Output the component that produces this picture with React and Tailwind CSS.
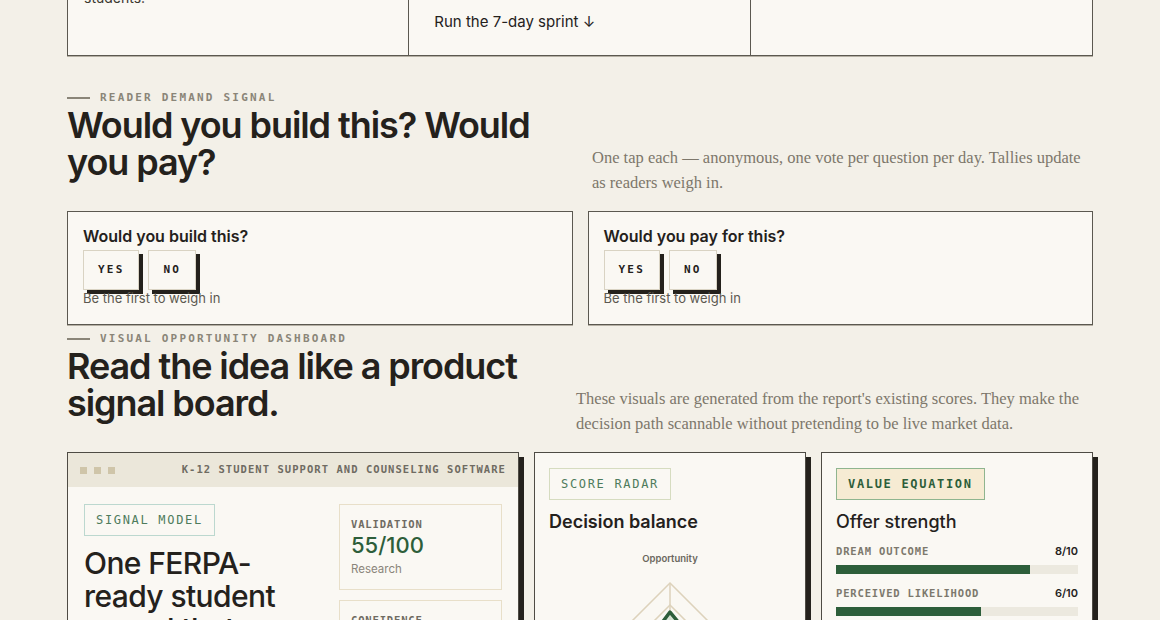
const display = "font-['Inter','Liberation_Sans',sans-serif]";
const mono = "font-['DejaVu_Sans_Mono','Liberation_Mono',monospace]";
const serif = "font-['Liberation_Serif','DejaVu_Serif',serif]";

function Eyebrow({ children }) {
    return (
        <div className="flex items-center gap-[10px]">
            <span className="h-[2px] w-[23px] bg-[#8a8578]" />
            <span className={`${mono} text-[11px] font-bold uppercase leading-[14px] tracking-[0.2em] text-[#8a8578]`}>
                {children}
            </span>
        </div>
    );
}

function SectionHead({ eyebrow, title, note, noteWidth }) {
    return (
        <div>
            <Eyebrow>{eyebrow}</Eyebrow>
            <div className="mt-[2px] flex items-end justify-between">
                <h2 className={`${display} w-[480px] pb-[14px] text-[36px] font-semibold leading-[37px] tracking-[-0.03em] text-[#24211c]`}>
                    {title}
                </h2>
                <p className={`${serif} ${noteWidth} text-[16.5px] leading-[25px] text-[#7d776b]`}>{note}</p>
            </div>
        </div>
    );
}

function VoteCard({ question }) {
    return (
        <div className="border border-[#5b5850] bg-[#faf8f3] px-[15px] pb-[17px] pt-[14px] shadow-[0_1px_0_#b5b0a4]">
            <h3 className={`${display} text-[16px] font-semibold leading-[20px] text-[#24211c]`}>{question}</h3>
            <div className="mt-[4px] flex gap-[9px]">
                {['YES', 'NO'].map((label) => (
                    <button
                        key={label}
                        className={`${mono} h-10 border-[1.5px] border-[#d9d3c3] bg-[#faf8f3] px-[14px] text-[11px] font-bold tracking-[0.2em] text-[#24211c] shadow-[4px_4px_0_#24211c]`}
                    >
                        {label}
                    </button>
                ))}
            </div>
            <p className={`${display} text-[13px] leading-[17px] text-[#5c5850]`}>Be the first to weigh in</p>
        </div>
    );
}

function Tag({ children, className }) {
    return (
        <span className={`${mono} inline-block border-[1.5px] px-[11px] py-[7px] text-[12px] uppercase leading-[16px] tracking-[0.14em] ${className}`}>
            {children}
        </span>
    );
}

function Metric({ label, value, note }) {
    return (
        <div className="border-[1.5px] border-[#e8dfc9] px-[11px] pb-[13px] pt-[12px]">
            <div className={`${mono} text-[10.5px] font-bold uppercase leading-[14px] tracking-[0.08em] text-[#6f6b62]`}>{label}</div>
            <div className={`${display} mt-[1px] text-[22px] font-medium leading-[26px] text-[#2d5e3a]`}>{value}</div>
            <div className={`${display} mt-[4px] text-[11.5px] leading-[14px] text-[#8a857a]`}>{note}</div>
        </div>
    );
}

function Radar() {
    const cx = 120;
    const cy = 127;
    const r = 88;
    const levels = [0.25, 0.5, 0.75, 1];
    const values = [0.67, 0.55, 0.6, 0.5];
    const point = (i, k) => {
        const a = (Math.PI / 2) * i - Math.PI / 2;
        return [cx + Math.cos(a) * r * k, cy + Math.sin(a) * r * k];
    };
    return (
        <svg width="240" height="230" viewBox="0 0 240 230" className="mx-auto mt-[11px] block">
            <text x={cx} y="18" textAnchor="middle" fontSize="9.5" fontWeight="600" fill="#6b675d" fontFamily="Inter, sans-serif">
                Opportunity
            </text>
            {levels.map((k) => (
                <polygon
                    key={k}
                    points={[0, 1, 2, 3].map((i) => point(i, k).join(',')).join(' ')}
                    fill="none"
                    stroke="#ddd2bb"
                    strokeWidth="1.5"
                />
            ))}
            {[0, 1, 2, 3].map((i) => {
                const [x, y] = point(i, 1);
                return <line key={i} x1={cx} y1={cy} x2={x} y2={y} stroke="#ddd2bb" strokeWidth="1.5" />;
            })}
            <polygon
                points={values.map((v, i) => point(i, v).join(',')).join(' ')}
                fill="#cfe0cf"
                fillOpacity="0.8"
                stroke="#2d5e3a"
                strokeWidth="3.5"
                strokeLinejoin="round"
            />
        </svg>
    );
}

function Bar({ label, score }) {
    return (
        <div>
            <div className="flex items-center justify-between">
                <span className={`${mono} text-[10.5px] font-bold uppercase leading-[14px] tracking-[0.08em] text-[#7d786d]`}>{label}</span>
                <span className={`${display} text-[11px] font-semibold leading-[14px] text-[#24211c]`}>{score}/10</span>
            </div>
            <div className="mt-[7px] h-[9px] bg-[#ece9df]">
                <div className="h-full bg-[#2d5e3a]" style={{ width: `${score * 10}%` }} />
            </div>
        </div>
    );
}

export default function App() {
    return (
        <div className="h-[620px] overflow-hidden bg-[#f3f0e8]">
            <div className="mx-auto w-[1026px]">
                {/* tail of the plan card above */}
                <div className="-mt-[70px] grid h-[126px] grid-cols-3 border border-[#5b5850] bg-[#faf8f3] shadow-[0_1px_0_#b5b0a4]">
                    <div className="flex flex-col justify-end border-r border-[#5b5850] px-[16px] pb-[47px]">
                        <p className={`${display} text-[14px] leading-[20px] text-[#3a372f]`}>
                            One record of every check-in and referral for counselors and
                            <br />
                            students.
                        </p>
                    </div>
                    <div className="flex flex-col justify-end border-r border-[#5b5850] px-[25px] pb-[23px]">
                        <span className={`${display} text-[15px] leading-[20px] text-[#24211c]`}>Run the 7-day sprint ↓</span>
                    </div>
                    <div />
                </div>

                <section className="mt-[35px]">
                    <SectionHead
                        eyebrow="Reader demand signal"
                        title="Would you build this? Would you pay?"
                        note="One tap each — anonymous, one vote per question per day. Tallies update as readers weigh in."
                        noteWidth="w-[501px]"
                    />
                    <div className="mt-[16px] grid grid-cols-2 gap-[15px]">
                        <VoteCard question="Would you build this?" />
                        <VoteCard question="Would you pay for this?" />
                    </div>
                </section>

                <section className="mt-[7px]">
                    <SectionHead
                        eyebrow="Visual opportunity dashboard"
                        title="Read the idea like a product signal board."
                        note="These visuals are generated from the report's existing scores. They make the decision path scannable without pretending to be live market data."
                        noteWidth="w-[517px]"
                    />
                    <div className="mt-[16px] grid grid-cols-[452px_1fr_1fr] gap-[15px]">
                        <div className="border border-[#4e4b44] bg-[#faf8f3] shadow-[5px_5px_0_#24211c]">
                            <div className="flex h-[34px] items-center justify-between bg-[#ebe7da] px-[12px]">
                                <div className="flex gap-[7px]">
                                    <span className="h-[7px] w-[7px] bg-[#cfc5a9]" />
                                    <span className="h-[7px] w-[7px] bg-[#cfc5a9]" />
                                    <span className="h-[7px] w-[7px] bg-[#cfc5a9]" />
                                </div>
                                <span className={`${mono} text-[10.5px] font-bold uppercase tracking-[0.1em] text-[#6f6b62]`}>
                                    K-12 Student Support and Counseling Software
                                </span>
                            </div>
                            <div className="grid grid-cols-[1fr_163px] gap-[20px] px-[16px] pt-[17px]">
                                <div>
                                    <Tag className="border-[#bcd8cf] text-[#4e7b5c]">Signal model</Tag>
                                    <h3 className={`${display} mt-[11px] text-[30px] font-medium leading-[33px] tracking-[-0.02em] text-[#24211c]`}>
                                        One FERPA-ready student record that counselors trust.
                                    </h3>
                                </div>
                                <div className="flex flex-col gap-[10px]">
                                    <Metric label="Validation" value="55/100" note="Research" />
                                    <Metric label="Confidence" value="Medium" note="Signals" />
                                </div>
                            </div>
                        </div>

                        <div className="border border-[#4e4b44] bg-[#faf8f3] px-[14px] pt-[15px] shadow-[5px_5px_0_#24211c]">
                            <Tag className="border-[#d6dcc0] text-[#4e7b5c]">Score radar</Tag>
                            <h3 className={`${display} mt-[11px] text-[18px] font-semibold leading-[22px] text-[#24211c]`}>Decision balance</h3>
                            <Radar />
                        </div>

                        <div className="border border-[#4e4b44] bg-[#faf8f3] px-[14px] pt-[15px] shadow-[5px_5px_0_#24211c]">
                            <Tag className="border-[#8fb58f] bg-[#f6ebd3] font-bold text-[#2d5e3a]">Value equation</Tag>
                            <h3 className={`${display} mt-[11px] text-[18px] font-medium leading-[22px] text-[#24211c]`}>Offer strength</h3>
                            <div className="mt-[11px] flex flex-col gap-[12px]">
                                <Bar label="Dream outcome" score={8} />
                                <Bar label="Perceived likelihood" score={6} />
                                <Bar label="Time delay" score={5} />
                            </div>
                        </div>
                    </div>
                </section>
            </div>
        </div>
    );
}
